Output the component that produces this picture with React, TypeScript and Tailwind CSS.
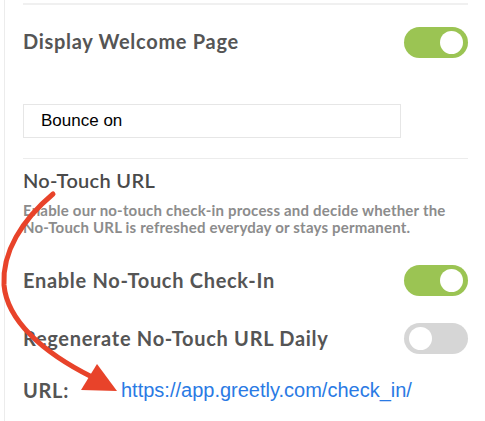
import React from "react";

function Toggle({ on }: { on: boolean }) {
  return (
    <div
      className={
        "relative w-[64px] h-[31px] rounded-full shrink-0 " +
        (on ? "bg-[#9bc453]" : "bg-[#d6d6d6]")
      }
    >
      <div
        className={
          "absolute top-[4px] w-[23px] h-[23px] rounded-full bg-white " +
          (on ? "right-[5px]" : "left-[5px]")
        }
      />
    </div>
  );
}

export default function App() {
  const nunito = { fontFamily: "Lato, 'Open Sans', sans-serif" };
  return (
    <div className="relative w-[485px] h-[421px] bg-white overflow-hidden">
      <div className="ml-[4px] h-full border-l border-[#ececec] pl-[18px] pr-[17px]" style={nunito}>
        <div className="pt-[3px]">
          <div className="h-[2px] bg-[#f0f0f0]" />
        </div>
        <div className="h-[74px] flex items-center justify-between">
          <span className="text-[20px] tracking-[0.7px] font-bold text-[#555555] -mt-[3px]">Display Welcome Page</span>
          <Toggle on={true} />
        </div>
        <div className="mt-[25px] w-[378px] h-[34px] border border-[#e6e6e6] flex items-center pl-[17px]">
          <span className="text-[17px] text-black" style={{ fontFamily: "'Liberation Sans', Arial, sans-serif" }}>
            Bounce on
          </span>
        </div>
        <div className="mt-[20px] h-px bg-[#ececec]" />
        <div className="mt-[9px] h-[24px] leading-[24px] text-[20px] tracking-[0.3px] font-semibold text-[#4a4a4a]">
          No-Touch URL
        </div>
        <div className="mt-[10px] text-[15px] tracking-[0.2px] leading-[17px] font-bold text-[#8c8c8c]">
          <div>Enable our no-touch check-in process and decide whether the</div>
          <div>No-Touch URL is refreshed everyday or stays permanent.</div>
        </div>
        <div className="mt-[24px] h-[40px] flex items-center justify-between">
          <span className="text-[20px] tracking-[0.7px] font-bold text-[#555555]">Enable No-Touch Check-In</span>
          <Toggle on={true} />
        </div>
        <div className="mt-[18px] h-[40px] flex items-center justify-between">
          <span className="text-[20px] tracking-[0.7px] font-bold text-[#555555]">Regenerate No-Touch URL Daily</span>
          <Toggle on={false} />
        </div>
        <div className="mt-[12px] h-[40px] flex items-center">
          <span className="w-[98px] text-[20px] tracking-[0.7px] font-bold text-[#555555]">URL:</span>
          <span
            className="text-[20px] text-[#2a7ae4]"
            style={{ fontFamily: "'Liberation Sans', Arial, sans-serif" }}
          >
            https://app.greetly.com/check_in/
          </span>
        </div>
      </div>
      <svg className="absolute left-0 top-0 pointer-events-none" width="485" height="421">
        <path
          d="M53 194 C 22 220, 2 252, 4 285 C 7 320, 42 352, 92 377"
          fill="none"
          stroke="#e8432a"
          strokeWidth="5"
          strokeLinecap="round"
        />
        <polygon points="97,364 81,390 117,391" fill="#e8432a" />
      </svg>
    </div>
  );
}
